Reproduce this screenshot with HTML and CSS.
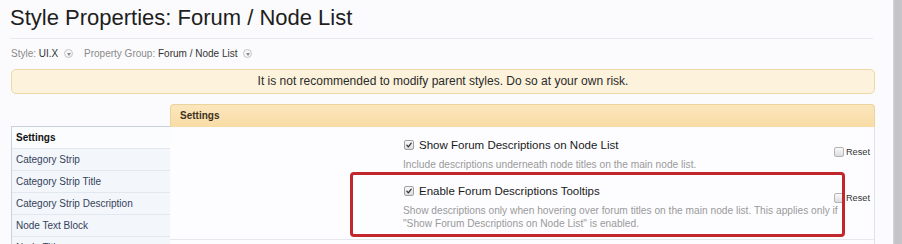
FILE: index.html
```html
<!DOCTYPE html>
<html>
<head>
<meta charset="utf-8">
<link rel="stylesheet" href="styles.css">
</head>
<body>
<div class="frame">
  <div class="page">
    <h1 class="title">Style Properties: Forum / Node List</h1>
    <div class="crumbs">
      <span class="crumb-label">Style:</span> <span class="crumb-value">UI.X</span><span class="dd"></span>
      <span class="crumb-label gap">Property Group:</span> <span class="crumb-value">Forum / Node List</span><span class="dd"></span>
    </div>
    <div class="notice">It is not recommended to modify parent styles. Do so at your own risk.</div>
    <div class="layout">
      <ul class="sidebar">
        <li class="active">Settings</li>
        <li>Category Strip</li>
        <li>Category Strip Title</li>
        <li>Category Strip Description</li>
        <li>Node Text Block</li>
        <li>Node Title</li>
      </ul>
      <div class="main">
        <div class="main-head">Settings</div>
        <div class="content">
          <div class="row row1">
            <div class="opt">
              <label class="opt-label"><span class="cb checked"><svg viewBox="0 0 10 10" width="10" height="10"><path d="M2.3 5.2 L4.2 7.3 L7.8 2.6" fill="none" stroke="#333" stroke-width="1.6" stroke-linecap="round" stroke-linejoin="round"/></svg></span>Show Forum Descriptions on Node List</label>
              <p class="hint">Include descriptions underneath node titles on the main node list.</p>
            </div>
            <label class="reset"><span class="cb"></span>Reset</label>
          </div>
          <div class="row row2">
            <div class="opt">
              <label class="opt-label"><span class="cb checked"><svg viewBox="0 0 10 10" width="10" height="10"><path d="M2.3 5.2 L4.2 7.3 L7.8 2.6" fill="none" stroke="#333" stroke-width="1.6" stroke-linecap="round" stroke-linejoin="round"/></svg></span>Enable Forum Descriptions Tooltips</label>
              <p class="hint">Show descriptions only when hovering over forum titles on the main node list. This applies only if<br>"Show Forum Descriptions on Node List" is enabled.</p>
            </div>
            <label class="reset"><span class="cb"></span>Reset</label>
          </div>
          <div class="highlight"></div>
        </div>
      </div>
    </div>
  </div>
  <div class="scrollbar"></div>
</div>
</body>
</html>
```

FILE: styles.css
```css
html, body {
  margin: 0;
  padding: 0;
  height: 100%;
  overflow: hidden;
}
body {
  background: #fbfbfd;
  font-family: "Liberation Sans", Arial, sans-serif;
  color: #222;
}
.frame {
  display: flex;
  height: 244px;
}
.page {
  flex: 0 0 865px;
  width: 865px;
  min-width: 0;
  margin-left: 10px;
}
.scrollbar {
  margin-left: 18px;
  flex: 1;
  background: linear-gradient(to right, #d9d9dc 0, #c3c3c7 2px, #c6c6ca 100%);
}
.title {
  margin: 0 2px 0 0;
  padding-top: 5px;
  font-size: 22px;
  font-weight: normal;
  line-height: 26px;
  color: #1e1e1e;
  border-bottom: 1px solid #e8e8ee;
  box-sizing: border-box;
  height: 39px;
}
.crumbs {
  height: 30px;
  line-height: 30px;
  padding-left: 1px;
  font-size: 10px;
  white-space: nowrap;
}
.crumb-label { color: #8a8a8a; }
.crumb-value { color: #333; }
.crumb-label.gap { margin-left: 8px; }
.dd {
  display: inline-block;
  vertical-align: middle;
  width: 9px;
  height: 9px;
  box-sizing: border-box;
  margin-left: 6px;
  margin-top: -2px;
  border: 1px solid #c4c4c4;
  border-radius: 50%;
  background: #f6f6f6;
  position: relative;
}
.dd::after {
  content: "";
  position: absolute;
  left: 1.5px;
  top: 3px;
  border-left: 2px solid transparent;
  border-right: 2px solid transparent;
  border-top: 3px solid #8a8a8a;
}
.notice {
  height: 25px;
  box-sizing: border-box;
  margin-left: 1px;
  border: 1px solid #ecd7a7;
  border-radius: 5px;
  background: #fdf3dc;
  text-align: center;
  font-size: 12px;
  line-height: 23px;
  color: #2a2a2a;
}
.layout {
  display: flex;
  margin-top: 10px;
  margin-left: 1px;
}
.sidebar {
  list-style: none;
  margin: 22px 0 0 0;
  padding: 0;
  flex: 0 0 159px;
  border-left: 1px solid #c9d3df;
  border-top: 1px solid #c9d3df;
  box-sizing: border-box;
}
.sidebar li {
  height: 22px;
  line-height: 21px;
  padding-left: 4px;
  font-size: 10px;
  color: #34425a;
  background: #f3f6fa;
  border-bottom: 1px solid #e2e8ef;
  box-sizing: border-box;
}
.sidebar li.active {
  background: #fbfcfe;
  font-weight: bold;
  color: #111;
}
.main {
  flex: 1;
  min-width: 0;
  display: flex;
  flex-direction: column;
}
.main-head {
  height: 23px;
  box-sizing: border-box;
  border: 1px solid #ecd29c;
  border-bottom: none;
  border-radius: 4px 4px 0 0;
  background: linear-gradient(to bottom, #fbe6bd, #f8dca5);
  font-size: 10px;
  font-weight: bold;
  color: #3d3220;
  line-height: 22px;
  padding-left: 9px;
}
.content {
  position: relative;
  background: #fdfdff;
  border-right: 1px solid #dfe2e8;
  height: 200px;
}
.row {
  display: flex;
  padding-left: 234px;
  padding-right: 4px;
}
.opt {
  flex: 1;
  min-width: 0;
}
.row1 {
  padding-top: 11px;
  height: 48px;
  box-sizing: border-box;
}
.row2 {
  padding-top: 9px;
  height: 65px;
  box-sizing: border-box;
  border-bottom: 1px solid #e6e8ee;
}
.opt-label {
  display: flex;
  align-items: center;
  font-size: 11.5px;
  color: #1a1a1a;
  height: 14px;
}
.opt-label .cb { margin-right: 5px; }
.hint {
  margin: 6px 0 0 -1px;
  font-size: 10.2px;
  line-height: 13px;
  color: #9a9a9a;
  white-space: nowrap;
}
.cb {
  display: inline-flex;
  width: 10px;
  height: 10px;
  box-sizing: border-box;
  border: 1px solid #b4b4b4;
  border-radius: 2px;
  background: linear-gradient(to bottom, #fafafa, #dcdcdc);
  align-items: center;
  justify-content: center;
  flex: none;
}
.cb svg { display: block; width: 8px; height: 8px; }
.cb.checked { border-color: #a0a0a0; }
.reset {
  display: flex;
  align-items: center;
  font-size: 9.2px;
  color: #333;
  height: 14px;
  margin-top: 7px;
  flex: none;
}
.reset .cb { margin-right: 2px; }
.highlight {
  position: absolute;
  left: 180px;
  top: 45px;
  width: 495px;
  height: 65px;
  box-sizing: border-box;
  border: 3px solid #c2272d;
  border-radius: 4px;
}
```
